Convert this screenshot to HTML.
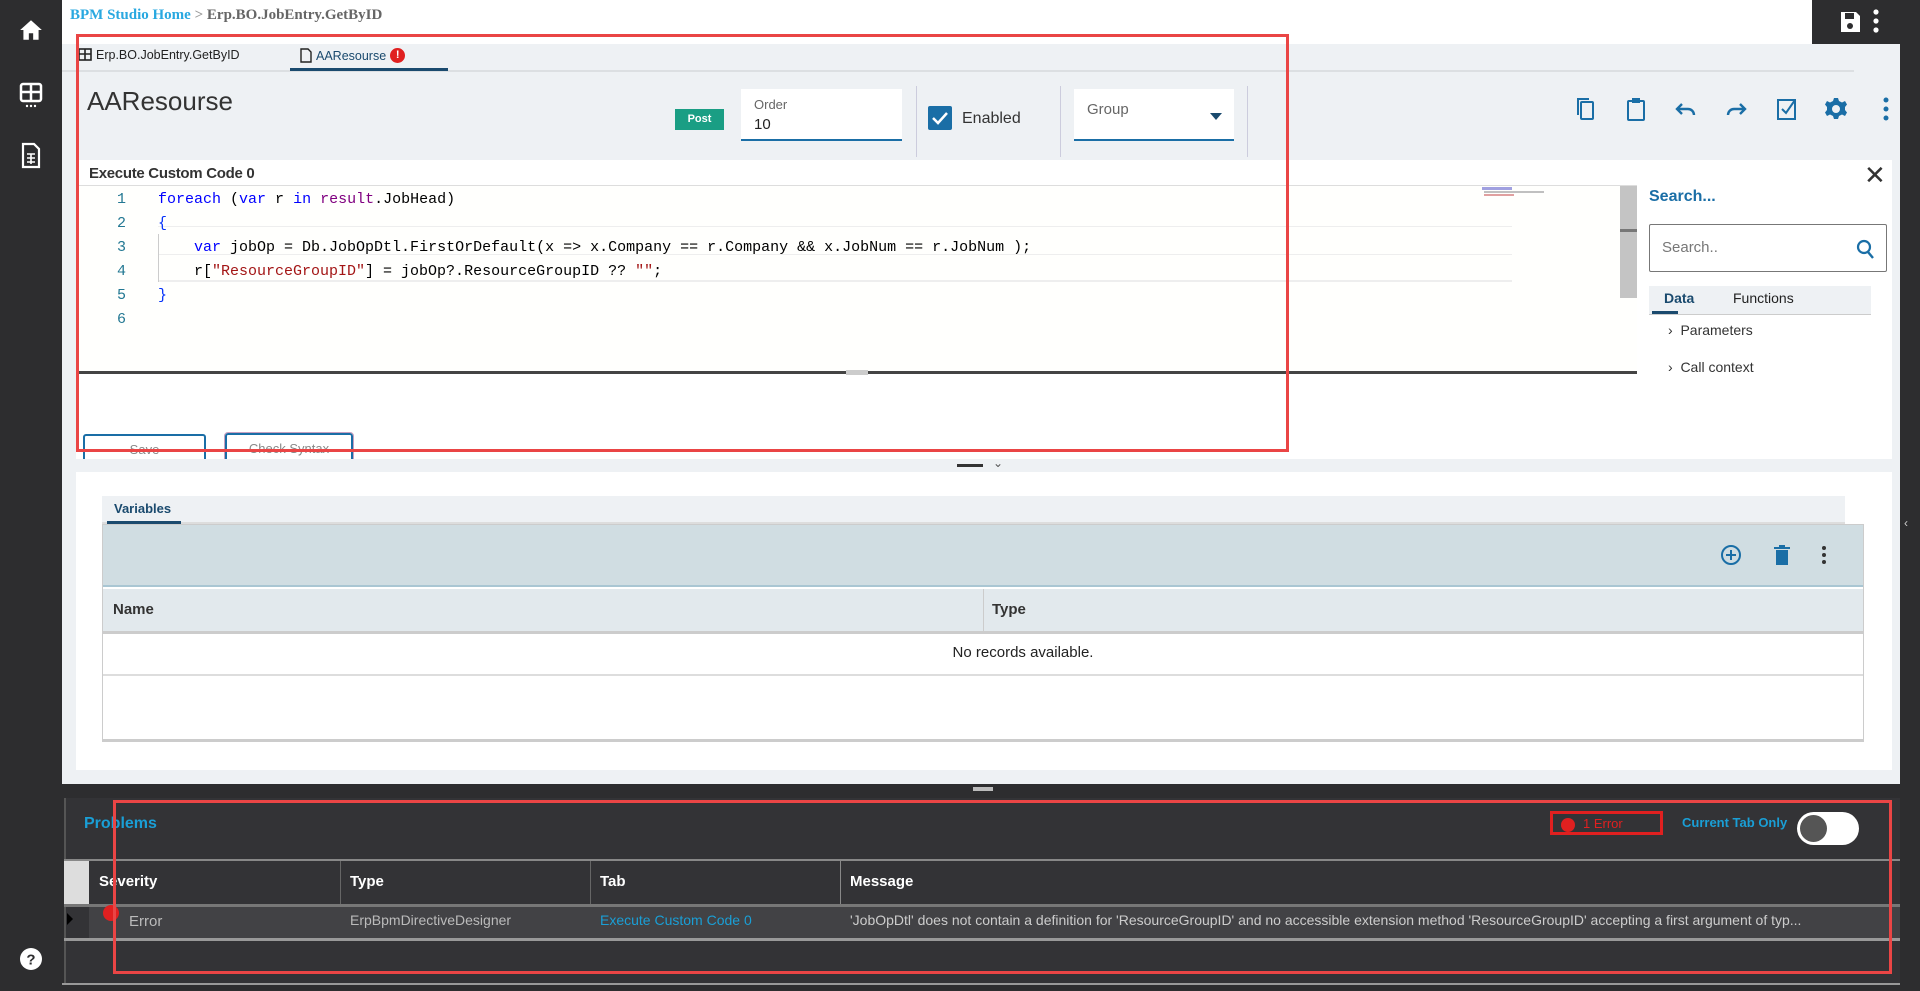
<!DOCTYPE html>
<html><head><meta charset="utf-8"><style>
*{box-sizing:border-box;margin:0;padding:0}
body{width:1920px;height:991px;overflow:hidden;position:relative;background:#fff;font-family:"Liberation Sans",sans-serif;font-size:14px;color:#222}
.a{position:absolute}
.mono{font-family:"Liberation Mono",monospace;font-size:15px}
</style></head><body>
<!-- sidebar -->
<div class="a" style="left:0;top:0;width:62px;height:991px;background:#2d2d2f"></div>
<svg class="a" style="left:18px;top:17px" width="26" height="26" viewBox="0 0 24 24"><path d="M12 3L2 12h3v9h5v-6h4v6h5v-9h3z" fill="#fff"/></svg>
<svg class="a" style="left:19px;top:82px" width="24" height="26" viewBox="0 0 24 26"><rect x="2" y="2" width="20" height="17" rx="2" fill="none" stroke="#fff" stroke-width="2.5"/><path d="M2 10h20M12 2v17" stroke="#fff" stroke-width="2.5"/><circle cx="8" cy="24" r="1.2" fill="#fff"/><circle cx="12" cy="24" r="1.2" fill="#fff"/><circle cx="16" cy="24" r="1.2" fill="#fff"/></svg>
<svg class="a" style="left:20px;top:142px" width="22" height="27" viewBox="0 0 22 27"><path d="M3 2h11l5 5v18H3z" fill="none" stroke="#fff" stroke-width="2.2"/><path d="M7 12h8M7 16h8M7 20h8M11 12v10" stroke="#fff" stroke-width="1.6"/></svg>
<svg class="a" style="left:19px;top:947px" width="24" height="24" viewBox="0 0 24 24"><circle cx="12" cy="12" r="11" fill="#fff"/><text x="12" y="17.5" text-anchor="middle" font-family="Liberation Sans" font-weight="bold" font-size="15" fill="#2d2d2f">?</text></svg>
<!-- top -->
<div class="a" style="left:70px;top:7px;font-family:'Liberation Serif',serif;font-weight:bold;font-size:15px"><span style="color:#29a8e0">BPM Studio Home</span> <span style="color:#999">&gt;</span> <span style="color:#666">Erp.BO.JobEntry.GetByID</span></div>
<div class="a" style="left:1812px;top:0;width:108px;height:44px;background:#2d2d2f"></div>
<svg class="a" style="left:1838px;top:9px" width="24" height="26" viewBox="0 0 24 26"><path d="M3 3h15l4 4v16H3z" fill="#fff"/><rect x="7" y="4" width="9" height="6" fill="#2d2d2f"/><circle cx="12" cy="17" r="3" fill="#2d2d2f"/></svg>
<svg class="a" style="left:1872px;top:8px" width="8" height="26"><circle cx="4" cy="4" r="2.6" fill="#fff"/><circle cx="4" cy="13" r="2.6" fill="#fff"/><circle cx="4" cy="22" r="2.6" fill="#fff"/></svg>
<div class="a" style="left:1900px;top:44px;width:20px;height:947px;background:#2d2d2f"></div>
<div class="a" style="left:1904px;top:516px;color:#ccc;font-size:12px">‹</div>
<!-- main gray -->
<div class="a" style="left:62px;top:44px;width:1838px;height:740px;background:#eef1f4"></div>
<div class="a" style="left:62px;top:70px;width:1792px;height:2px;background:#dcdfe2"></div>
<div class="a" style="left:78px;top:48px;font-size:12.5px;display:flex;align-items:center;gap:4px"><svg width="14" height="14" viewBox="0 0 14 14"><rect x="1" y="1" width="12" height="11" fill="none" stroke="#222" stroke-width="1.6"/><path d="M1 6h12M7 1v11" stroke="#222" stroke-width="1.6"/></svg>Erp.BO.JobEntry.GetByID</div>
<div class="a" style="left:300px;top:48px;font-size:12.5px;color:#1a4a6e;display:flex;align-items:center;gap:4px"><svg width="12" height="15" viewBox="0 0 12 15"><path d="M1 1h7l3 3v10H1z" fill="none" stroke="#222" stroke-width="1.4"/></svg>AAResourse <span style="display:inline-block;width:15px;height:15px;border-radius:50%;background:#e02020;color:#fff;font-size:11px;text-align:center;line-height:15px;font-weight:bold">!</span></div>
<div class="a" style="left:290px;top:68px;width:158px;height:3px;background:#1a4a6e"></div>
<div class="a" style="left:87px;top:86px;font-size:26px;color:#333">AAResourse</div>
<div class="a" style="left:675px;top:109px;width:49px;height:21px;background:#1a9e84;color:#fff;font-size:11px;font-weight:bold;text-align:center;line-height:21px">Post</div>
<div class="a" style="left:741px;top:89px;width:161px;height:52px;background:#fff;border-bottom:2px solid #1a6ea6"><div style="position:absolute;left:13px;top:8px;font-size:13px;color:#666">Order</div><div style="position:absolute;left:13px;top:27px;font-size:15px">10</div></div>
<div class="a" style="left:916px;top:86px;width:1px;height:71px;background:#ccd"></div>
<div class="a" style="left:928px;top:106px;width:24px;height:24px;background:#1a6ea6;border-radius:2px"><svg width="24" height="24"><path d="M5 12l5 5 9-10" fill="none" stroke="#fff" stroke-width="2.5"/></svg></div>
<div class="a" style="left:962px;top:110px;font-size:16px;color:#333">Enabled</div>
<div class="a" style="left:1060px;top:86px;width:1px;height:71px;background:#ccd"></div>
<div class="a" style="left:1074px;top:89px;width:160px;height:52px;background:#fff;border-bottom:2px solid #1a6ea6"><div style="position:absolute;left:13px;top:12px;font-size:15px;color:#666">Group</div><div style="position:absolute;right:12px;top:24px;width:0;height:0;border-left:6px solid transparent;border-right:6px solid transparent;border-top:7px solid #1a4a6e"></div></div>
<div class="a" style="left:1247px;top:86px;width:1px;height:71px;background:#ccd"></div>
<!-- toolbar icons -->
<svg class="a" style="left:1574px;top:96px" width="24" height="26" viewBox="0 0 24 26"><rect x="7" y="6" width="12" height="17" rx="1" fill="none" stroke="#1a6ea6" stroke-width="2"/><path d="M4 19V3h11" fill="none" stroke="#1a6ea6" stroke-width="2"/></svg>
<svg class="a" style="left:1624px;top:96px" width="24" height="26" viewBox="0 0 24 26"><rect x="4" y="5" width="16" height="19" rx="1" fill="none" stroke="#1a6ea6" stroke-width="2"/><rect x="8" y="2" width="8" height="5" fill="#1a6ea6"/></svg>
<svg class="a" style="left:1674px;top:98px" width="24" height="22" viewBox="0 0 24 22"><path d="M8 6l-5 5 5 5M3 11h11a6 6 0 016 6" fill="none" stroke="#1a6ea6" stroke-width="2.4"/></svg>
<svg class="a" style="left:1724px;top:98px" width="24" height="22" viewBox="0 0 24 22"><path d="M16 6l5 5-5 5M21 11H10a6 6 0 00-6 6" fill="none" stroke="#1a6ea6" stroke-width="2.4"/></svg>
<svg class="a" style="left:1775px;top:96px" width="24" height="26" viewBox="0 0 24 26"><rect x="3" y="4" width="17" height="19" fill="none" stroke="#1a6ea6" stroke-width="2"/><path d="M7 13l4 4 9-13" fill="none" stroke="#1a6ea6" stroke-width="2"/></svg>
<svg class="a" style="left:1824px;top:97px" width="24" height="24" viewBox="0 0 24 24"><path d="M12 8a4 4 0 100 8 4 4 0 000-8z M10 1h4l1 3 3 1.5 3-1.5 2 3.5-2 2.5v3l2 2.5-2 3.5-3-1.5-3 1.5-1 3h-4l-1-3-3-1.5-3 1.5-2-3.5 2-2.5v-3L1 7.5 3 4l3 1.5L9 4z" fill="#1a6ea6" fill-rule="evenodd"/></svg>
<svg class="a" style="left:1882px;top:96px" width="8" height="26"><circle cx="4" cy="4" r="2.5" fill="#1a6ea6"/><circle cx="4" cy="13" r="2.5" fill="#1a6ea6"/><circle cx="4" cy="22" r="2.5" fill="#1a6ea6"/></svg>
<!-- code section -->
<div class="a" style="left:76px;top:160px;width:1816px;height:299px;background:#fff"></div>
<div class="a" style="left:89px;top:165px;font-size:15px;font-weight:bold;color:#333;letter-spacing:-.3px">Execute Custom Code 0</div>
<div class="a" style="left:76px;top:185px;width:1561px;height:1px;background:#ddd"></div>
<div class="a" style="left:76px;top:186px;width:1561px;height:186px;background:#fffffd"></div>
<div class="a" style="left:158px;top:226px;width:1354px;height:1px;background:#eee"></div>
<div class="a" style="left:158px;top:280px;width:1354px;height:2px;background:#eee"></div>
<div class="a" style="left:158px;top:254px;width:1354px;height:1px;background:#eee"></div>
<div class="a" style="left:158px;top:234px;width:1px;height:48px;background:#ccc"></div>
<div class="a mono" style="left:110px;top:188px;line-height:24px;color:#237893;text-align:right;width:16px">1<br>2<br>3<br>4<br>5<br>6</div>
<div class="a mono" style="left:158px;top:188px;line-height:24px;white-space:pre;color:#000"><span style="color:#0000ff">foreach</span> (<span style="color:#0000ff">var</span> r <span style="color:#0000ff">in</span> <span style="color:#800080">result</span>.JobHead)
<span style="color:#0431fa">{</span>
    <span style="color:#0000ff">var</span> jobOp = Db.JobOpDtl.FirstOrDefault(x => x.Company == r.Company &amp;&amp; x.JobNum == r.JobNum );
    r[<span style="color:#a31515">"ResourceGroupID"</span>] = jobOp?.ResourceGroupID ?? <span style="color:#a31515">""</span>;
<span style="color:#0431fa">}</span>
</div>
<div class="a" style="left:1482px;top:187px;width:30px;height:3px;background:#a0a0e0"></div>
<div class="a" style="left:1484px;top:191px;width:60px;height:2px;background:#c0c0c0"></div>
<div class="a" style="left:1484px;top:194px;width:30px;height:2px;background:#e0a0a0"></div>
<div class="a" style="left:1620px;top:186px;width:17px;height:112px;background:#c4c4c4"></div>
<div class="a" style="left:1620px;top:229px;width:17px;height:3px;background:#777"></div>
<div class="a" style="left:76px;top:371px;width:1561px;height:3px;background:#444"></div>
<div class="a" style="left:846px;top:370px;width:22px;height:5px;background:#ccc"></div>
<div class="a" style="left:1864px;top:160px;font-size:26px;color:#333">✕</div>
<div class="a" style="left:1649px;top:188px;font-size:16px;color:#1a6ea6;font-weight:bold">Search...</div>
<div class="a" style="left:1649px;top:224px;width:238px;height:48px;border:1px solid #777;border-radius:2px;background:#fff"><div style="position:absolute;left:12px;top:14px;font-size:15px;color:#777">Search..</div><svg style="position:absolute;right:10px;top:14px" width="20" height="22" viewBox="0 0 20 22"><circle cx="8" cy="8" r="6" fill="none" stroke="#1a6ea6" stroke-width="2.2"/><path d="M12 13l5 6" stroke="#1a6ea6" stroke-width="2.4"/></svg></div>
<div class="a" style="left:1649px;top:286px;width:222px;height:29px;background:#eef1f4;border-bottom:1px solid #ccc"></div>
<div class="a" style="left:1664px;top:290px;font-size:14px;font-weight:bold;color:#1a4a6e">Data</div>
<div class="a" style="left:1652px;top:311px;width:26px;height:3px;background:#1a4a6e"></div>
<div class="a" style="left:1733px;top:290px;font-size:14px;color:#222">Functions</div>
<div class="a" style="left:1668px;top:322px;font-size:14px;color:#333">›&nbsp;&nbsp;Parameters</div>
<div class="a" style="left:1668px;top:359px;font-size:14px;color:#333">›&nbsp;&nbsp;Call context</div>
<div class="a" style="left:83px;top:434px;width:123px;height:30px;border:2px solid #1a6ea6;border-radius:3px;background:#fff;text-align:center;padding-top:6px;color:#888;font-size:13px">Save</div>
<div class="a" style="left:225px;top:433px;width:128px;height:32px;border:2px solid #1a6ea6;outline:1px solid #c8a0c0;border-radius:3px;background:#fff;text-align:center;padding-top:6px;color:#888;font-size:13px">Check Syntax</div>
<div class="a" style="left:62px;top:459px;width:1838px;height:13px;background:#eef1f4"></div>
<div class="a" style="left:957px;top:464px;width:26px;height:3px;background:#333"></div>
<div class="a" style="left:993px;top:456px;font-size:12px;color:#555">⌄</div>
<!-- red box 1 -->
<div class="a" style="left:76px;top:34px;width:1213px;height:418px;border:3px solid #ea4545"></div>
<!-- variables -->
<div class="a" style="left:76px;top:472px;width:1816px;height:298px;background:#fff"></div>
<div class="a" style="left:102px;top:496px;width:1743px;height:28px;background:#eef1f4;border-bottom:2px solid #ddd"></div>
<div class="a" style="left:114px;top:501px;font-size:13px;font-weight:bold;color:#1a4a6e">Variables</div>
<div class="a" style="left:107px;top:521px;width:74px;height:3px;background:#1a4a6e"></div>
<div class="a" style="left:102px;top:524px;width:1762px;height:218px;border:1px solid #ccc;border-bottom:3px solid #ccc;background:#fff"></div>
<div class="a" style="left:103px;top:525px;width:1760px;height:62px;background:#d0dde2;border-bottom:2px solid #a9c6d3"></div>
<svg class="a" style="left:1720px;top:544px" width="22" height="22" viewBox="0 0 22 22"><circle cx="11" cy="11" r="9" fill="none" stroke="#1a6ea6" stroke-width="2"/><path d="M11 6v10M6 11h10" stroke="#1a6ea6" stroke-width="2"/></svg>
<svg class="a" style="left:1772px;top:544px" width="20" height="22" viewBox="0 0 20 22"><rect x="4" y="6" width="12" height="15" fill="#1a6ea6"/><rect x="2" y="3" width="16" height="2" fill="#1a6ea6"/><rect x="7" y="1" width="6" height="2" fill="#1a6ea6"/></svg>
<svg class="a" style="left:1820px;top:545px" width="8" height="20"><circle cx="4" cy="3" r="2" fill="#333"/><circle cx="4" cy="10" r="2" fill="#333"/><circle cx="4" cy="17" r="2" fill="#333"/></svg>
<div class="a" style="left:103px;top:589px;width:1760px;height:45px;background:#e2e9ed;border-bottom:3px solid #ccc"></div>
<div class="a" style="left:983px;top:589px;width:1px;height:45px;background:#ccc"></div>
<div class="a" style="left:113px;top:601px;font-size:15px;font-weight:bold;color:#333">Name</div>
<div class="a" style="left:992px;top:601px;font-size:15px;font-weight:bold;color:#333">Type</div>
<div class="a" style="left:103px;top:674px;width:1760px;height:2px;background:#ddd"></div>
<div class="a" style="left:0;top:644px;text-align:center;font-size:15px;color:#222;padding-left:80px;width:1966px">No records available.</div>
<!-- dark problems panel -->
<div class="a" style="left:62px;top:784px;width:1838px;height:207px;background:#2d2d2f"></div>
<div class="a" style="left:973px;top:787px;width:20px;height:4px;background:#bbb"></div>
<div class="a" style="left:64px;top:798px;width:1836px;height:185px;background:#333336;border-left:2px solid #555"></div>
<div class="a" style="left:84px;top:815px;font-size:16px;color:#1a9fd6;font-weight:bold">Problems</div>
<div class="a" style="left:1550px;top:811px;width:113px;height:24px;border:3px solid #e02020;color:#e02020;font-size:13px;padding-left:8px;padding-top:2px"><span style="display:inline-block;width:14px;height:14px;border-radius:50%;background:#e02020;vertical-align:middle;margin-right:8px"></span>1 Error</div>
<div class="a" style="left:1682px;top:815px;font-size:13px;font-weight:bold;color:#1a9fd6">Current Tab Only</div>
<div class="a" style="left:1797px;top:812px;width:62px;height:33px;border-radius:17px;background:#fff"><div style="position:absolute;left:3px;top:3px;width:27px;height:27px;border-radius:50%;background:#555"></div></div>
<div class="a" style="left:64px;top:859px;width:1836px;height:2px;background:#888"></div>
<div class="a" style="left:64px;top:861px;width:25px;height:44px;background:#ddd"></div>
<div class="a" style="left:340px;top:861px;width:1px;height:77px;background:#666"></div>
<div class="a" style="left:590px;top:861px;width:1px;height:77px;background:#666"></div>
<div class="a" style="left:840px;top:861px;width:1px;height:44px;background:#888"></div>
<div class="a" style="left:99px;top:873px;font-size:15px;font-weight:bold;color:#fff">Severity</div>
<div class="a" style="left:350px;top:873px;font-size:15px;font-weight:bold;color:#fff">Type</div>
<div class="a" style="left:600px;top:873px;font-size:15px;font-weight:bold;color:#fff">Tab</div>
<div class="a" style="left:850px;top:873px;font-size:15px;font-weight:bold;color:#fff">Message</div>
<div class="a" style="left:64px;top:904px;width:1836px;height:3px;background:#777"></div>
<div class="a" style="left:89px;top:907px;width:1811px;height:31px;background:#424245"></div>
<div class="a" style="left:67px;top:913px;width:0;height:0;border-top:6px solid transparent;border-bottom:6px solid transparent;border-left:6px solid #000"></div>
<div class="a" style="left:103px;top:905px;width:16px;height:16px;border-radius:50%;background:#e02020"></div>
<div class="a" style="left:129px;top:913px;font-size:15px;color:#bbb">Error</div>
<div class="a" style="left:350px;top:912px;font-size:14px;color:#bbb">ErpBpmDirectiveDesigner</div>
<div class="a" style="left:600px;top:912px;font-size:14px;color:#1a9fd6">Execute Custom Code 0</div>
<div class="a" style="left:850px;top:912px;font-size:14px;color:#ccc;white-space:nowrap;width:1042px;overflow:hidden">'JobOpDtl' does not contain a definition for 'ResourceGroupID' and no accessible extension method 'ResourceGroupID' accepting a first argument of typ...</div>
<div class="a" style="left:64px;top:938px;width:1836px;height:3px;background:#999"></div>
<div class="a" style="left:62px;top:983px;width:1838px;height:2px;background:#999"></div>
<div class="a" style="left:113px;top:800px;width:1779px;height:174px;border:3px solid #ea4545"></div>
</body></html>
